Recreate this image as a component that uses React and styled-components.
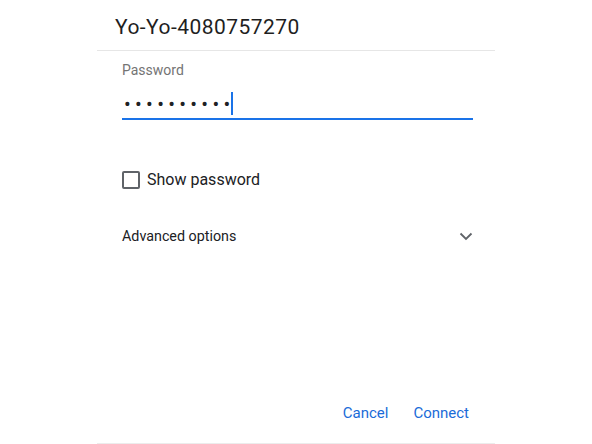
import React, { useState } from "react";
import styled, { createGlobalStyle } from "styled-components";

const GlobalStyle = createGlobalStyle`
  html, body {
    margin: 0;
    padding: 0;
    background: #ffffff;
    font-family: Roboto, "Liberation Sans", sans-serif;
    color: #202124;
  }
`;

const Dialog = styled.div`
  width: 398px;
  height: 443px;
  margin-left: 97px;
  display: flex;
  flex-direction: column;
  border-bottom: 1px solid #ececec;
`;

const Header = styled.div`
  height: 51px;
  display: flex;
  align-items: center;
  padding-left: 18px;
  padding-top: 4px;
  border-bottom: 1px solid #e6e6e6;
  font-size: 21px;
  letter-spacing: 0.45px;
  color: #1f1f1f;
  box-sizing: border-box;
`;

const Body = styled.div`
  flex: 1;
  padding: 0 22px 0 25px;
  display: flex;
  flex-direction: column;
`;

const Label = styled.div`
  margin-top: 11px;
  font-size: 14px;
  color: #747474;
  height: 16px;
`;

const Field = styled.div`
  margin-top: 11px;
  height: 29px;
  display: flex;
  align-items: center;
  border-bottom: 2px solid #1a73e8;
`;

const Dots = styled.span`
  padding-left: 2px;
  font-size: 20px;
  letter-spacing: 4.3px;
  color: #202124;
  line-height: 1;
`;

const Caret = styled.span`
  width: 2px;
  height: 23px;
  background: #1a73e8;
  margin-left: -3px;
`;

const CheckRow = styled.label`
  margin-top: 50px;
  display: flex;
  align-items: center;
  gap: 7px;
  font-size: 16px;
  color: #202124;
  cursor: pointer;
`;

const Box = styled.span`
  width: 14px;
  height: 14px;
  border: 2px solid #5f6368;
  border-radius: 2px;
  background: ${(p) => (p.checked ? "#1a73e8" : "transparent")};
`;

const Advanced = styled.div`
  margin-top: 39px;
  display: flex;
  align-items: center;
  justify-content: space-between;
  font-size: 14.3px;
  color: #202124;
`;

const Actions = styled.div`
  margin-top: auto;
  margin-bottom: 21px;
  display: flex;
  justify-content: flex-end;
  padding-right: 4px;
`;

const TextButton = styled.button`
  background: none;
  border: none;
  font-family: inherit;
  font-size: 15px;
  color: #1a6bd8;
  padding: 0 0 0 ${(p) => p.gap || 0}px;
  cursor: pointer;
`;

const App = () => {
  const [show, setShow] = useState(false);

  return (
    <>
      <GlobalStyle />
      <Dialog>
        <Header>Yo-Yo-4080757270</Header>
        <Body>
          <Label>Password</Label>
          <Field>
            <Dots>{show ? "password12" : "••••••••••"}</Dots>
            <Caret />
          </Field>
          <CheckRow onClick={() => setShow(!show)}>
            <Box checked={show} />
            Show password
          </CheckRow>
          <Advanced>
            Advanced options
            <svg width="14" height="9" viewBox="0 0 14 9">
              <path d="M1.5 1.5 L7 7 L12.5 1.5" fill="none" stroke="#5f6368" strokeWidth="1.8" />
            </svg>
          </Advanced>
          <Actions>
            <TextButton>Cancel</TextButton>
            <TextButton gap={25}>Connect</TextButton>
          </Actions>
        </Body>
      </Dialog>
    </>
  );
};

export default App;
